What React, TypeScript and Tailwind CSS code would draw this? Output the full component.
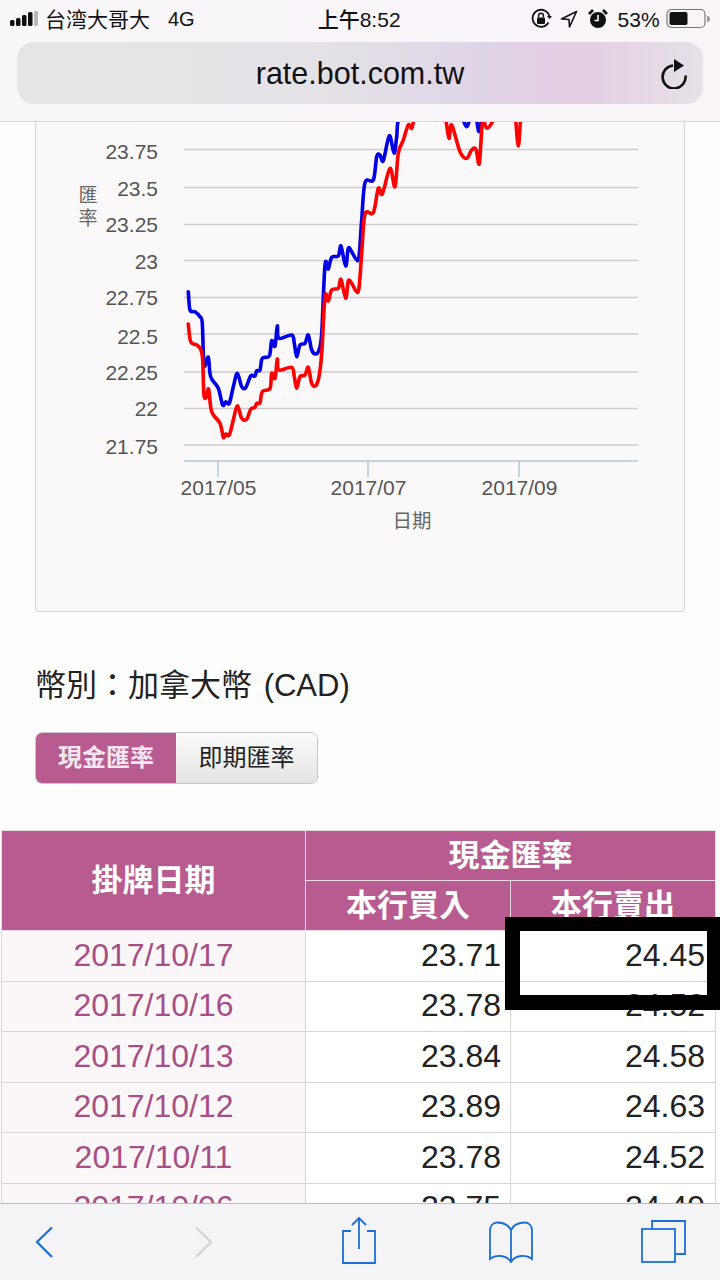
const toScreen = (pts: number[][]) =>
  pts.map(([x, y]) => [60 + x / 3, 120 + y / 3]);

// Catmull-Rom through the traced points, the chart line is a bit rounded
function smooth(pts: number[][]) {
  const p = toScreen(pts);
  let d = `M${p[0][0].toFixed(1)} ${p[0][1].toFixed(1)}`;
  for (let i = 0; i < p.length - 1; i++) {
    const a = p[i - 1] ?? p[i];
    const b = p[i];
    const c = p[i + 1];
    const e = p[i + 2] ?? c;
    const k = 6;
    d += ` C${(b[0] + (c[0] - a[0]) / k).toFixed(1)} ${(b[1] + (c[1] - a[1]) / k).toFixed(1)} ${(c[0] - (e[0] - b[0]) / k).toFixed(1)} ${(c[1] - (e[1] - b[1]) / k).toFixed(1)} ${c[0].toFixed(1)} ${c[1].toFixed(1)}`;
  }
  return d;
}

const blue = [
  [385, 515], [390, 570], [405, 575], [420, 590], [427, 610], [432, 735], [445, 712], [452, 770], [475, 805],
  [488, 855], [497, 845], [508, 850], [520, 800], [532, 760], [545, 800], [557, 803], [572, 768], [585, 768],
  [590, 752], [600, 750], [607, 715], [628, 708], [635, 662], [645, 678], [652, 618], [657, 655], [695, 645],
  [703, 670], [710, 710], [720, 675], [735, 670], [745, 645], [755, 690], [767, 702], [777, 690], [785, 640],
  [795, 435], [805, 447], [815, 412], [835, 408], [843, 378], [857, 438], [865, 385], [875, 395], [888, 417],
  [897, 410], [905, 300], [915, 188], [940, 180], [950, 110], [960, 105], [970, 122], [988, 47], [1002, 100],
  [1010, 50], [1015, 0], [1040, -60], [1195, -60], [1210, 0], [1220, 20], [1228, 0], [1240, -60], [1250, 0],
  [1257, 35], [1265, 0], [1280, -60],
];

const red = [
  [385, 612], [392, 665], [410, 675], [422, 688], [428, 720], [432, 825], [440, 830], [446, 808], [455, 875],
  [480, 910], [490, 952], [497, 942], [508, 945], [520, 900], [532, 857], [545, 895], [560, 898], [572, 868],
  [585, 862], [590, 850], [600, 848], [607, 815], [630, 805], [635, 760], [645, 775], [652, 717], [657, 750],
  [695, 742], [703, 770], [710, 805], [720, 770], [735, 765], [745, 742], [755, 790], [767, 797], [777, 770],
  [785, 700], [795, 530], [805, 543], [815, 510], [835, 505], [843, 478], [857, 535], [865, 483], [875, 490],
  [888, 513], [897, 505], [905, 400], [915, 283], [940, 278], [955, 205], [967, 222], [990, 145], [1005, 200],
  [1015, 100], [1030, 60], [1045, 15], [1055, 25], [1062, 0], [1080, -60], [1150, -60], [1158, 0], [1167, 55],
  [1175, 15], [1200, 95], [1220, 115], [1235, 90], [1248, 88], [1258, 130], [1268, 0], [1280, 25], [1300, 0],
  [1320, -60], [1360, -60], [1367, 0], [1375, 78], [1382, 0], [1395, -60],
];

// label, grid line y, label baseline y
const yTicks: [string, number, number][] = [
  ["23.75", 149.5, 159], ["23.5", 187.5, 195.5], ["23.25", 224.5, 232], ["23", 260.5, 268.5], ["22.75", 297.5, 304.5],
  ["22.5", 334, 344], ["22.25", 372, 379.5], ["22", 408.5, 416], ["21.75", 445, 454],
];

const xTicks: [string, number][] = [["2017/05", 218], ["2017/07", 368], ["2017/09", 519]];

const rows = [
  ["2017/10/17", "23.71", "24.45"],
  ["2017/10/16", "23.78", "24.52"],
  ["2017/10/13", "23.84", "24.58"],
  ["2017/10/12", "23.89", "24.63"],
  ["2017/10/11", "23.78", "24.52"],
  ["2017/10/06", "23.75", "24.49"],
];

function StatusBar() {
  return (
    <div className="flex h-[38px] items-center pl-[10px] pr-[8px] text-[#111]">
      <svg width="28" height="18" viewBox="0 0 28 18">
        <rect x="0" y="10" width="4.5" height="6" rx="1.5" fill="#111" />
        <rect x="6" y="8" width="4.5" height="8" rx="1.5" fill="#111" />
        <rect x="12" y="5" width="4.5" height="11" rx="1.5" fill="#111" />
        <rect x="18" y="2" width="4.5" height="14" rx="1.5" fill="#111" />
        <rect x="24" y="1" width="4" height="15" rx="1.5" fill="#b9b9b9" />
      </svg>
      <span className="ml-[7px] text-[21px] leading-none">台湾大哥大</span>
      <span className="ml-[18px] text-[20px] leading-none">4G</span>
      <span className="ml-[123px] text-[21px] font-medium leading-none">上午8:52</span>
      <svg className="ml-[129px]" width="22" height="22" viewBox="0 0 22 22" fill="none" stroke="#111">
        <path d="M18.5 14.5A8.5 8.5 0 1 1 19.5 9" strokeWidth="1.8" />
        <path d="M17 8l2.6 3L22 8z" fill="#111" stroke="none" />
        <rect x="7" y="9.5" width="8" height="6.5" rx="1" fill="#111" stroke="none" />
        <path d="M8.6 9.5V7.6a2.4 2.4 0 0 1 4.8 0v1.9" strokeWidth="1.5" />
      </svg>
      <svg className="ml-[8px]" width="18" height="20" viewBox="0 0 18 20" fill="none" stroke="#111" strokeWidth="1.6" strokeLinejoin="round">
        <path d="M16.5 2.5L1.500 10l7.500 .5L9.500 18z" />
      </svg>
      <svg className="ml-[10px]" width="20" height="22" viewBox="0 0 20 22">
        <circle cx="10" cy="12" r="8" fill="#111" />
        <path d="M10 7v5.5H6.5" fill="none" stroke="#fff" strokeWidth="1.6" />
        <path d="M1 6l4-4M19 6l-4-4" stroke="#111" strokeWidth="2.6" />
      </svg>
      <span className="ml-[10px] text-[21px] leading-none">53%</span>
      <svg className="ml-[6px]" width="46" height="22" viewBox="0 0 46 22">
        <rect x="1" y="1.5" width="38" height="18" rx="4.5" fill="none" stroke="#777" strokeWidth="1.2" />
        <rect x="3.5" y="4" width="18" height="13" rx="2" fill="#111" />
        <path d="M41 8v6a3 3 0 0 0 0-6z" fill="#999" />
      </svg>
    </div>
  );
}

function UrlBar() {
  return (
    <div className="relative mx-[17px] mt-[4px] flex h-[62px] items-center justify-center rounded-[17px] bg-[linear-gradient(90deg,#e5e5e7_0%,#e4e2e6_45%,#dfd4e6_68%,#e3cfe2_82%,#e6e0e8_100%)]">
      <span className="text-[30.500px] leading-none text-[#111]">rate.bot.com.tw</span>
      <svg className="absolute right-[15px] top-[17px]" width="28" height="30" viewBox="0 0 28 30" fill="none">
        <path d="M25.5 16.5A11.5 11.5 0 1 1 13 6.5" stroke="#111" strokeWidth="2.6" />
        <path d="M14 0l10 6.5L14 13z" fill="#111" />
      </svg>
    </div>
  );
}

function Chart() {
  return (
    <div className="h-[490px] rounded-b-[4px] border-x border-b border-[#d6d4d6] bg-[#fbf8fa]">
      <svg className="block" width="648" height="489" viewBox="36 122 648 489">
        {yTicks.map(([label, y, by]) => (
          <g key={label}>
            <line x1="184" x2="638" y1={y} y2={y} stroke="#cccccc" strokeWidth="1.5" />
            <text x="158" y={by} textAnchor="end" fontSize="21" fill="#555555">{label}</text>
          </g>
        ))}
        <line x1="184" x2="638" y1="461" y2="461" stroke="#b4c7d8" strokeWidth="1.5" />
        {xTicks.map(([label, x]) => (
          <g key={label}>
            <line x1={x} x2={x} y1="461" y2="477" stroke="#b4c7d8" strokeWidth="1.5" />
            <text x={x + 0.5} y="495" textAnchor="middle" fontSize="21" fill="#555555">{label}</text>
          </g>
        ))}
        <text x="412" y="528" textAnchor="middle" fontSize="19.5" fill="#666666">日期</text>
        <text x="88" y="202" textAnchor="middle" fontSize="19" fill="#666666">匯</text>
        <text x="88" y="225" textAnchor="middle" fontSize="19" fill="#666666">率</text>
        <path d={smooth(blue)} fill="none" stroke="#0000e6" strokeWidth="3.6" strokeLinejoin="round" strokeLinecap="round" />
        <path d={smooth(red)} fill="none" stroke="#ff0000" strokeWidth="3.6" strokeLinejoin="round" strokeLinecap="round" />
      </svg>
    </div>
  );
}

function RateTable() {
  return (
    <table className="ml-[1px] mt-[46px] w-[714px] table-fixed border-collapse">
      <colgroup>
        <col className="w-[304px]" />
        <col className="w-[205px]" />
        <col className="w-[205px]" />
      </colgroup>
      <thead className="bg-[#b85b90] text-[31px] text-white">
        <tr className="h-[50px]">
          <th rowSpan={2} className="border border-[#e6dbe2] font-bold leading-none">掛牌日期</th>
          <th colSpan={2} className="border border-[#e6dbe2] font-bold leading-none">現金匯率</th>
        </tr>
        <tr className="h-[50px]">
          <th className="border border-[#e6dbe2] font-bold leading-none">本行買入</th>
          <th className="border border-[#e6dbe2] font-bold leading-none">本行賣出</th>
        </tr>
      </thead>
      <tbody className="text-[32px] leading-none">
        {rows.map(([date, buy, sell]) => (
          <tr key={date} className="h-[50.5px]">
            <td className="border border-[#d6d6d6] bg-[#fbf7f9] pb-[2px] text-center text-[#a64f86]">{date}</td>
            <td className="border border-[#d6d6d6] bg-white pb-[2px] pr-[9px] text-right text-[#222]">{buy}</td>
            <td className="border border-[#d6d6d6] bg-white pb-[2px] pr-[10px] text-right text-[#222]">{sell}</td>
          </tr>
        ))}
      </tbody>
    </table>
  );
}

function BottomBar() {
  return (
    <div className="absolute bottom-0 left-0 flex h-[77px] w-full items-center border-t border-[#bdbdbd] bg-[#f4f4f6]">
      <svg className="ml-[34px]" width="20" height="34" viewBox="0 0 20 34" fill="none" stroke="#1a6fd8" strokeWidth="2.2">
        <path d="M18 2.500L3 17l15 15" />
      </svg>
      <svg className="ml-[140px]" width="20" height="34" viewBox="0 0 20 34" fill="none" stroke="#d3d3d3" strokeWidth="2.2">
        <path d="M2 2.500L17 17 2 32" />
      </svg>
      <svg className="mb-[4px] ml-[128px]" width="36" height="48" viewBox="0 0 36 48" fill="none" stroke="#1a6fd8" strokeWidth="1.8">
        <path d="M9 15H1v32h32V15h-8" />
        <path d="M17 33V2M10 9l7-7 7 7" />
      </svg>
      <svg className="ml-[110px]" width="46" height="42" viewBox="0 0 46 42" fill="none" stroke="#1a6fd8" strokeWidth="1.8">
        <path d="M23 9C20 3 14 1.500 9 1.500 5 1.500 2 5 2 9v29c5-4 16-5 21 3 5-8 16-7 21-3V9c0-4-3-7.500-7-7.500C32 1.500 26 3 23 9zM23 9v32" />
      </svg>
      <svg className="ml-[107px]" width="46" height="44" viewBox="0 0 46 44" fill="none" stroke="#1a6fd8" strokeWidth="1.8">
        <path d="M11 8V1h33v33h-9" />
        <rect x="1" y="9" width="33" height="33" />
      </svg>
    </div>
  );
}

export default function App() {
  return (
    <div className="relative h-[1280px] w-[720px] overflow-hidden bg-[#fefdfe] font-['Liberation_Sans','Noto_Sans_CJK_TC',sans-serif]">
      <header className="h-[122px] border-b border-[#d8d6da] bg-gradient-to-r from-[#f8f7f9] via-[#f9f5fa] to-[#f8f4f8]">
        <StatusBar />
        <UrlBar />
      </header>
      <main>
        <div className="mx-[35px]">
          <Chart />
          <h2 className="mt-[56px] h-[36px] text-[31px] font-normal leading-[36px] text-[#222]">
            幣別：加拿大幣 <span className="ml-[3px] leading-none">(CAD)</span>
          </h2>
          <div className="mt-[28px] flex h-[52px] w-[283px] overflow-hidden rounded-[7px] border border-[#c9c5c8] text-[24px] leading-none">
            <span className="flex w-[140px] items-center justify-center bg-[#b85b90] font-bold text-[#f6e6ef]">現金匯率</span>
            <span className="flex flex-1 items-center justify-center bg-gradient-to-b from-[#fbfbfb] to-[#e4e4e4] text-[#222]">即期匯率</span>
          </div>
        </div>
        <RateTable />
      </main>
      <div className="absolute left-[505px] top-[917px] h-[93px] w-[215px] border-b-[15px] border-l-[15px] border-r-[13px] border-t-[14px] border-black" />
      <BottomBar />
    </div>
  );
}
